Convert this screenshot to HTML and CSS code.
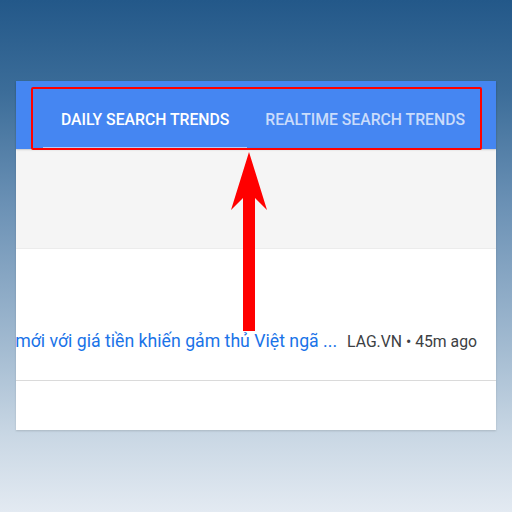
FILE: index.html
```html
<!DOCTYPE html>
<html>
<head>
<meta charset="utf-8">
<link rel="stylesheet" href="styles.css">
</head>
<body>
<div class="stage">
  <div class="card">
    <div class="header">
      <div class="tabs">
        <div class="tab active">DAILY SEARCH TRENDS</div>
        <div class="tab">REALTIME SEARCH TRENDS</div>
      </div>
      <div class="highlight"></div>
    </div>
    <div class="filter"></div>
    <div class="story">
      <span class="title">Ra mắt phiên bản mới với giá tiền khiến gảm thủ Việt ngã ...</span>
      <span class="source">LAG.VN • 45m ago</span>
    </div>
    <div class="footer"></div>
  </div>
  <svg class="arrow" width="40" height="182" viewBox="0 0 40 182">
    <polygon fill="#ff0000" points="19,0 37,58 25,46 25,179 13,179 13,46 1,58"/>
  </svg>
</div>
</body>
</html>
```
FILE: styles.css
```css
html, body {
  margin: 0;
  padding: 0;
  height: 100%;
}
body {
  background: linear-gradient(180deg, #235889 0%, #3c6d99 18%, #6b91b5 40%, #a3bbd1 68%, #c9d7e4 85%, #e3eaf2 100%);
  font-family: Roboto, "Noto Sans", "Liberation Sans", sans-serif;
}
.stage {
  position: relative;
  padding: 81px 16px 0 16px;
}
.card {
  width: 480px;
  background: #fff;
  box-shadow: 0 1px 2px rgba(0,0,0,0.15);
}
.header {
  position: relative;
  height: 68px;
  background: #4586f2;
  box-shadow: 0 1px 2px rgba(0,0,0,0.12);
}
.tabs {
  display: flex;
  padding-left: 27px;
  height: 68px;
}
.tab {
  box-sizing: border-box;
  height: 68px;
  padding: 0 18px;
  display: flex;
  align-items: center;
  font-size: 15.75px;
  font-weight: 500;
  color: rgba(255,255,255,0.72);
  padding-top: 8px;
  white-space: nowrap;
}
.tab.active {
  color: #fff;
  border-bottom: 2px solid #b3cdf9;
  padding-top: 10px;
}
.highlight {
  position: absolute;
  left: 15px;
  top: 6px;
  width: 451px;
  height: 63px;
  border: 2px solid #ff0000;
  border-radius: 2px;
  box-sizing: border-box;
}
.filter {
  height: 98px;
  background: #f5f5f5;
  border-top: 1px solid #e8e8e8;
  border-bottom: 1px solid #ececec;
}
.story {
  height: 132px;
  display: flex;
  justify-content: flex-end;
  align-items: flex-end;
  overflow: hidden;
  padding: 0 19px 29px 0;
  box-sizing: border-box;
  border-bottom: 1px solid #dadada;
  white-space: nowrap;
}
.title {
  flex-shrink: 0;
  font-size: 17.7px;
  color: #1a73e8;
  margin-right: 10px;
}
.source {
  flex-shrink: 0;
  font-size: 15.75px;
  color: #3c4043;
}
.footer {
  height: 49px;
}
.arrow {
  position: absolute;
  left: 230px;
  top: 152px;
}
```
